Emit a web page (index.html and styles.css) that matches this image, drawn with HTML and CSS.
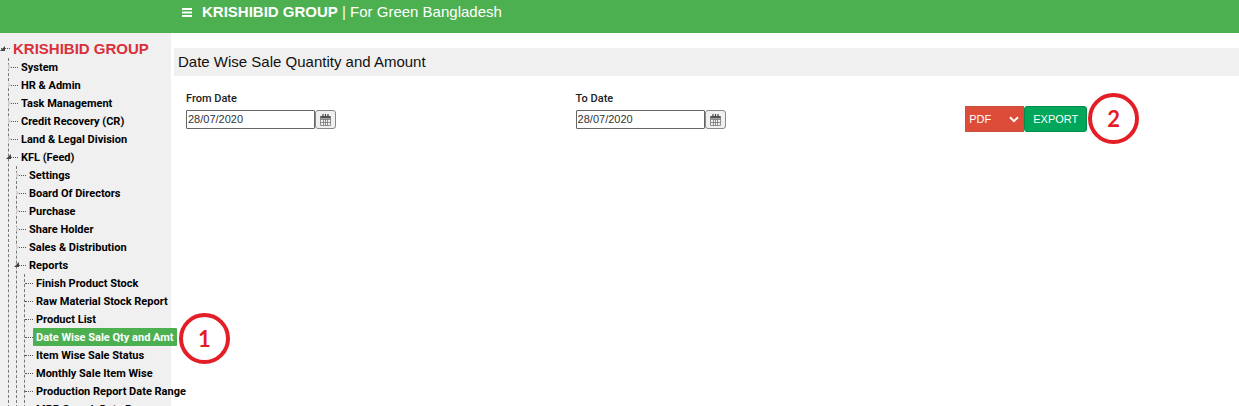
FILE: index.html
```html
<!DOCTYPE html>
<html lang="en">
<head>
<meta charset="utf-8">
<title>KRISHIBID GROUP | For Green Bangladesh</title>
<link rel="stylesheet" href="styles.css">
</head>
<body>
<header class="topbar">
  <button class="menu-btn" type="button" aria-label="Toggle menu"><svg width="10" height="9" viewBox="0 0 10 9"><path d="M0 1h10M0 4.500h10M0 8h10" stroke="#fff" stroke-width="1.900"/></svg></button>
  <div class="brand"><strong>KRISHIBID GROUP</strong> | For Green Bangladesh</div>
</header>
<div class="layout">
  <nav class="sidebar" aria-label="Modules">
    <div class="row root open"><a href="#">KRISHIBID GROUP</a></div>
    <ul class="tree">
      <li><div class="row closed"><a href="#">System</a></div></li>
      <li><div class="row closed"><a href="#">HR &amp; Admin</a></div></li>
      <li><div class="row closed"><a href="#">Task Management</a></div></li>
      <li><div class="row closed"><a href="#">Credit Recovery (CR)</a></div></li>
      <li><div class="row closed"><a href="#">Land &amp; Legal Division</a></div></li>
      <li><div class="row open"><a href="#">KFL (Feed)</a></div>
        <ul class="tree">
          <li><div class="row closed"><a href="#">Settings</a></div></li>
          <li><div class="row closed"><a href="#">Board Of Directors</a></div></li>
          <li><div class="row closed"><a href="#">Purchase</a></div></li>
          <li><div class="row closed"><a href="#">Share Holder</a></div></li>
          <li><div class="row closed"><a href="#">Sales &amp; Distribution</a></div></li>
          <li><div class="row open"><a href="#">Reports</a></div>
            <ul class="tree">
              <li><div class="row"><a href="#">Finish Product Stock</a></div></li>
              <li><div class="row"><a href="#">Raw Material Stock Report</a></div></li>
              <li><div class="row"><a href="#">Product List</a></div></li>
              <li><div class="row"><a class="active" href="#">Date Wise Sale Qty and Amt</a><span class="step">1</span></div></li>
              <li><div class="row"><a href="#">Item Wise Sale Status</a></div></li>
              <li><div class="row"><a href="#">Monthly Sale Item Wise</a></div></li>
              <li><div class="row"><a href="#">Production Report Date Range</a></div></li>
              <li><div class="row"><a href="#">MRP Search Date Range</a></div></li>
            </ul>
          </li>
        </ul>
      </li>
    </ul>
  </nav>
  <main class="content">
    <h1 class="title">Date Wise Sale Quantity and Amount</h1>
    <form class="filters">
      <div class="field">
        <label for="from">From Date</label>
        <div class="date"><input id="from" type="text" value="28/07/2020"><button type="button" aria-label="Pick from date"><svg width="11" height="12" viewBox="0 0 11 12"><path d="M.5 2.500h10v9H.5zM.5 5.500h10M.5 8.500h10M3.500 5v6.500M5.500 5v6.500M7.500 5v6.500" fill="none" stroke="#777" stroke-width=".8"/><path d="M.5 2h10v2.500H.5z" fill="#555"/><path d="M3 0v3M5.500 0v3M8 0v3" stroke="#444" stroke-width="1.200"/></svg></button></div>
      </div>
      <div class="field">
        <label for="to">To Date</label>
        <div class="date"><input id="to" type="text" value="28/07/2020"><button type="button" aria-label="Pick to date"><svg width="11" height="12" viewBox="0 0 11 12"><path d="M.5 2.500h10v9H.5zM.5 5.500h10M.5 8.500h10M3.500 5v6.500M5.500 5v6.500M7.500 5v6.500" fill="none" stroke="#777" stroke-width=".8"/><path d="M.5 2h10v2.500H.5z" fill="#555"/><path d="M3 0v3M5.500 0v3M8 0v3" stroke="#444" stroke-width="1.200"/></svg></button></div>
      </div>
      <div class="actions">
        <div class="format"><select aria-label="Export format"><option>PDF</option></select><svg width="10" height="7" viewBox="0 0 10 7"><path d="M1 1.200l4 4 4-4" fill="none" stroke="#fff" stroke-width="2"/></svg></div>
        <button class="export" type="button">EXPORT</button>
        <span class="step">2</span>
      </div>
    </form>
  </main>
</div>
</body>
</html>
```
FILE: styles.css
```css
* { box-sizing: border-box; }
body {
  margin: 0;
  height: 100vh;
  overflow: hidden;
  display: flex;
  flex-direction: column;
  background: #fff;
  color: #111;
  font-family: "Liberation Sans", Arial, sans-serif;
  font-size: 11px;
}
a { color: inherit; text-decoration: none; }
input, select, button { font: inherit; margin: 0; }

.topbar {
  flex: none;
  display: flex;
  align-items: center;
  gap: 10px;
  padding: 3px 0 12px 182px;
  background: #4caf50;
  color: #fff;
}
.menu-btn { display: flex; padding: 0; border: 0; background: none; }
.brand { font-size: 15px; line-height: 18px; white-space: nowrap; }

.layout { flex: 1; min-height: 0; display: flex; }
.sidebar {
  flex: none;
  position: relative;
  z-index: 1;
  width: 171px;
  padding-top: 6px;
  background: #f0f0f0;
  color: #000;
  font-weight: bold;
}
.tree {
  list-style: none;
  margin: 0 0 0 7px;
  padding: 0;
  border-left: 1px dashed #777;
  font-family: Roboto, "Liberation Sans", sans-serif;
}
.sidebar > .tree { margin-left: 8px; }
.row {
  position: relative;
  display: flex;
  align-items: center;
  height: 18px;
  white-space: nowrap;
}
.row::before { content: ""; flex: none; width: 8px; border-top: 1px dotted #555; }
.row.open::before, .row.closed::before { width: 9px; }
.row a { padding: 2px 3px 0; line-height: 16px; border-radius: 1px; }
.row .active { background: #4caf50; color: #fff; }
.row.root { height: 19px; padding-left: 1px; color: #d9303a; font-size: 15px; }
.row.root a { padding-top: 0; }
.row.open::after, .row.closed::after { content: ""; position: absolute; }
.row.open::after {
  left: -3px;
  top: 6px;
  border-left: 5px solid transparent;
  border-bottom: 5px solid #444;
}
.row.root.open::after { left: 0; top: 7px; }
.row.closed::after {
  left: -1px;
  top: 6px;
  border: 3px solid transparent;
  border-left-color: #d0d0d0;
  border-right: 0;
}

.content { flex: 1; min-width: 0; padding: 15px 0 0 3px; }
.title {
  margin: 0;
  padding: 5px 4px;
  background: #f0f0f0;
  font-size: 15px;
  line-height: 18px;
  font-weight: normal;
}
.filters {
  display: grid;
  grid-template-columns: 37% 37% 1fr;
  padding: 14px 0 0 12px;
}
.field { display: flex; flex-direction: column; gap: 3px; }
.field label {
  padding-top: 1px;
  line-height: 16px;
  color: #222;
  font-family: Roboto, "Liberation Sans", sans-serif;
  font-weight: 500;
}
.date { display: flex; }
.date input {
  width: 129px;
  height: 19px;
  padding: 0 1px 2px;
  border: 1px solid #666;
  border-radius: 1px;
  background: #fff;
  color: #333;
}
.date button {
  display: flex;
  align-items: center;
  justify-content: center;
  width: 21px;
  height: 19px;
  padding: 0;
  border: 1px solid #888;
  border-radius: 3px;
  background: #f0f0f0;
}
.actions { display: flex; align-items: flex-start; padding-top: 16px; position: relative; }
.format { display: grid; align-items: center; }
.format > * { grid-area: 1 / 1; }
.format select {
  appearance: none;
  width: 59px;
  height: 26px;
  padding: 0 3px;
  border: 1px solid #c5523f;
  border-radius: 0;
  background: #dd4b39;
  color: #fff;
}
.format svg { justify-self: end; margin-right: 5px; pointer-events: none; }
.export {
  height: 26px;
  padding: 0 8px;
  border: 1px solid #008d4c;
  border-radius: 3px;
  background: #00a65a;
  color: #fff;
}

.step {
  position: absolute;
  display: flex;
  align-items: center;
  justify-content: center;
  width: 51px;
  height: 51px;
  border: 4px solid #e31e26;
  border-radius: 50%;
  color: #e31e26;
  font: bold 22px/1 Lato, "Noto Sans", sans-serif;
}
.row .step { left: 154px; top: -15px; }
.actions .step { left: 123px; top: 3px; }
```
